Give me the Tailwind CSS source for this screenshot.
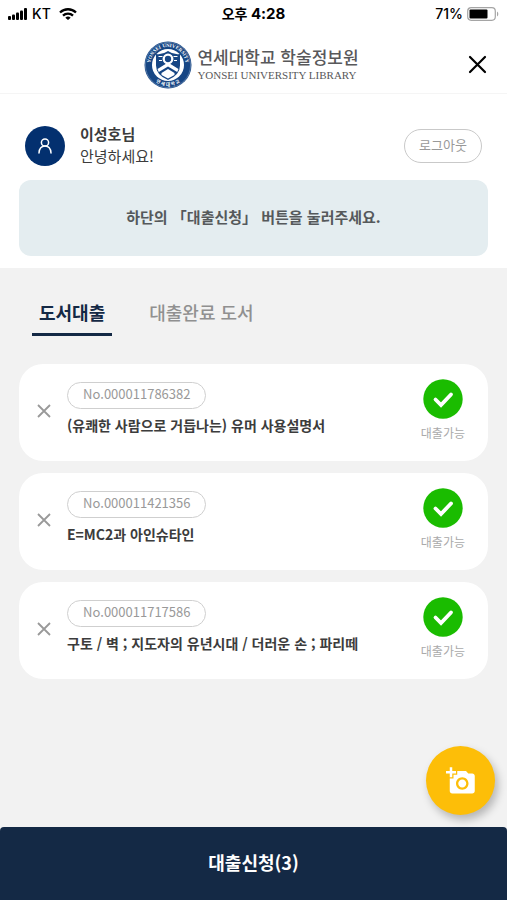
<!DOCTYPE html>
<html lang="ko">
<head>
    <meta charset="UTF-8">
    <meta name="viewport" content="width=device-width, initial-scale=1.0">
    <title>연세대학교 학술정보원</title>
    <script src="https://cdn.jsdelivr.net/npm/@tailwindcss/browser@4"></script>
</head>
<body class="flex min-h-screen flex-col bg-[#f2f2f2] font-['Noto_Sans_CJK_KR',sans-serif] text-[#3c3c3c]">

<!-- Status bar -->
<div class="grid h-7 grid-cols-3 items-center bg-white px-2 font-['Inter','Noto_Sans_CJK_KR',sans-serif] text-sm font-medium text-black">
    <div class="flex items-center gap-1">
        <svg class="h-3 w-5" viewBox="0 0 20 12" fill="currentColor" aria-hidden="true">
            <rect x="0" y="8" width="3" height="4" rx="1"/>
            <rect x="4" y="6.500" width="3" height="5.500" rx="1"/>
            <rect x="8" y="4.500" width="3" height="7.500" rx="1"/>
            <rect x="12" y="2.500" width="3" height="9.500" rx="1"/>
            <rect x="16" y="0" width="3" height="12" rx="1"/>
        </svg>
        <span>KT</span>
        <svg class="ml-1 h-3 w-[18px]" viewBox="0 0 18 12" fill="none" stroke="currentColor" stroke-width="2.300" aria-hidden="true">
            <path d="M1 4.500a11.500 11.500 0 0 1 16 0"/>
            <path d="M4 7.700a7.200 7.200 0 0 1 10 0"/>
            <path d="M6.300 9.700a3.900 3.900 0 0 1 5.400 0L9 12z" fill="currentColor" stroke="none"/>
        </svg>
    </div>
    <div class="text-center text-[15px] font-bold whitespace-nowrap"><span class="text-sm">오후</span> 4:28</div>
    <div class="flex items-center justify-end gap-1">
        <span>71%</span>
        <svg class="h-[14px] w-8" viewBox="0 0 32 14" aria-hidden="true">
            <rect x=".7" y=".7" width="27.600" height="12.600" rx="3.500" fill="#fff" stroke="#a5a5a5" stroke-width="1.200"/>
            <rect x="2.500" y="2.500" width="18" height="9" rx="1" fill="#000"/>
            <path d="M30 4.500a3 3 0 0 1 0 5z" fill="#a5a5a5"/>
        </svg>
    </div>
</div>

<!-- Header -->
<header class="relative flex h-[66px] items-center justify-center border-b border-[#f5f5f5] bg-white pt-2 pr-1">
    <a href="#" class="flex items-center gap-[5px]">
        <svg class="size-12" viewBox="0 0 48 48" aria-hidden="true">
            <defs>
                <path id="sealTop" d="M7.500 30A17.700 17.700 0 1 1 40.500 30"/>
                <path id="sealBottom" d="M5.500 34A21.200 21.200 0 0 0 42.500 34"/>
            </defs>
            <circle cx="24" cy="24" r="23.500" fill="#174684"/>
            <circle cx="24" cy="24" r="22.600" fill="none" stroke="#8ca6c6" stroke-width=".5"/>
            <circle cx="24" cy="24" r="16" fill="#fff"/>
            <text fill="#fff" font-family="Liberation Serif, serif" font-size="5" font-weight="700"><textPath href="#sealTop" startOffset="50%" text-anchor="middle">YONSEI UNIVERSITY</textPath></text>
            <text fill="#fff" font-family="Noto Sans CJK KR, sans-serif" font-size="4.500" font-weight="700"><textPath href="#sealBottom" startOffset="50%" text-anchor="middle">연 세 대 학 교</textPath></text>
            <path d="M12 13q6.500 1 12-3 5.500 4 12 3v11.500q0 9.500-12 14.500-12-5-12-14.500z" fill="#174684"/>
            <circle cx="24" cy="18" r="4.300" fill="#174684" stroke="#fff" stroke-width="2.300"/>
            <path d="M14.500 15.500h4M29.500 15.500h4M15 19.500h3M30 19.500h3" stroke="#fff" stroke-width="1"/>
            <path d="M13.500 28 24 21.500 34.500 28l-1.300 3L24 25.500 14.800 31z" fill="#fff"/>
            <path d="M17.500 32 24 28l6.500 4v2L24 37.500 17.500 34z" fill="#fff"/>
        </svg>
        <span class="flex flex-col whitespace-nowrap text-[#58585a]">
            <span class="text-[17px] leading-5 font-medium">연세대학교 학술정보원</span>
            <span class="font-['Liberation_Serif',serif] text-[11px] leading-4">YONSEI UNIVERSITY LIBRARY</span>
        </span>
    </a>
    <button type="button" aria-label="닫기" class="absolute right-5 text-black">
        <svg class="size-[19px]" viewBox="0 0 19 19" fill="none" stroke="currentColor" stroke-width="2.200" stroke-linecap="round"><path d="M2 2l15 15M17 2 2 17"/></svg>
    </button>
</header>

<!-- User -->
<section class="bg-white px-[19px] pt-[29px] pb-3">
    <div class="mb-[11px] flex h-[46px] items-center px-[6px]">
        <span class="flex size-10 items-center justify-center rounded-full bg-[#03306f] text-white">
            <svg class="size-4" viewBox="0 0 16 16" fill="none" stroke="currentColor" stroke-width="1.500" stroke-linecap="round" aria-hidden="true">
                <circle cx="8" cy="4.500" r="3.600"/>
                <path d="M2 15c.3-4 2.200-6.900 6-6.900s5.700 2.900 6 6.900"/>
            </svg>
        </span>
        <p class="ml-[15px] flex-1 pb-[2px] text-[15px] leading-[22px]">
            <span class="block font-bold">이성호님</span>
            <span class="block">안녕하세요!</span>
        </p>
        <button type="button" class="h-[34px] w-[78px] rounded-full border border-[#c9c9c9] pb-[2px] text-[13px] text-[#999]">로그아웃</button>
    </div>
    <p class="flex h-[76px] items-center justify-center rounded-xl bg-[#e4edf0] pb-[2px] text-[15px] font-bold text-[#55595b]">하단의 「대출신청」 버튼을 눌러주세요.</p>
</section>

<main class="flex-1 px-[19px] pt-[26px]">
    <!-- Tabs -->
    <nav class="ml-[13px] flex gap-[30px] text-lg leading-9 font-medium">
        <a href="#" aria-current="page" class="h-[42px] border-b-[3px] border-[#142945] px-[7px] font-bold text-[#142945]">도서대출</a>
        <a href="#" class="px-[7px] text-[#909090]">대출완료 도서</a>
    </nav>

    <!-- Books -->
    <ul class="mt-7 flex flex-col gap-3">
        <li class="flex h-[97px] items-center rounded-3xl bg-white pr-[23px] pl-[18px]">
            <button type="button" aria-label="삭제" class="mr-4 pb-1 text-[#999]">
                <svg class="size-[14px]" viewBox="0 0 14 14" fill="none" stroke="currentColor" stroke-width="1.800"><path d="M1 1l12 12M13 1 1 13"/></svg>
            </button>
            <div class="flex-1 pb-2">
                <span class="inline-flex h-[27px] items-center rounded-full border border-[#cfcfcf] px-[15px] pb-[2px] text-[13px] text-[#999]">No.000011786382</span>
                <h2 class="mt-1 text-sm leading-6 font-bold">(유쾌한 사람으로 거듭나는) 유머 사용설명서</h2>
            </div>
            <div class="flex flex-col items-center gap-1 pb-1 text-xs leading-5 text-[#aaa]">
                <svg class="size-10" viewBox="0 0 40 40" aria-hidden="true"><circle cx="20" cy="20" r="19.700" fill="#1abc00"/><path d="M12.500 20.500l5.500 5.500 10-10.500" fill="none" stroke="#fff" stroke-width="3.800" stroke-linecap="round"/></svg>
                대출가능
            </div>
        </li>
        <li class="flex h-[97px] items-center rounded-3xl bg-white pr-[23px] pl-[18px]">
            <button type="button" aria-label="삭제" class="mr-4 pb-1 text-[#999]">
                <svg class="size-[14px]" viewBox="0 0 14 14" fill="none" stroke="currentColor" stroke-width="1.800"><path d="M1 1l12 12M13 1 1 13"/></svg>
            </button>
            <div class="flex-1 pb-2">
                <span class="inline-flex h-[27px] items-center rounded-full border border-[#cfcfcf] px-[15px] pb-[2px] text-[13px] text-[#999]">No.000011421356</span>
                <h2 class="mt-1 text-sm leading-6 font-bold">E=MC2과 아인슈타인</h2>
            </div>
            <div class="flex flex-col items-center gap-1 pb-1 text-xs leading-5 text-[#aaa]">
                <svg class="size-10" viewBox="0 0 40 40" aria-hidden="true"><circle cx="20" cy="20" r="19.700" fill="#1abc00"/><path d="M12.500 20.500l5.500 5.500 10-10.500" fill="none" stroke="#fff" stroke-width="3.800" stroke-linecap="round"/></svg>
                대출가능
            </div>
        </li>
        <li class="flex h-[97px] items-center rounded-3xl bg-white pr-[23px] pl-[18px]">
            <button type="button" aria-label="삭제" class="mr-4 pb-1 text-[#999]">
                <svg class="size-[14px]" viewBox="0 0 14 14" fill="none" stroke="currentColor" stroke-width="1.800"><path d="M1 1l12 12M13 1 1 13"/></svg>
            </button>
            <div class="flex-1 pb-2">
                <span class="inline-flex h-[27px] items-center rounded-full border border-[#cfcfcf] px-[15px] pb-[2px] text-[13px] text-[#999]">No.000011717586</span>
                <h2 class="mt-1 text-sm leading-6 font-bold">구토 / 벽 ; 지도자의 유년시대 / 더러운 손 ; 파리떼</h2>
            </div>
            <div class="flex flex-col items-center gap-1 pb-1 text-xs leading-5 text-[#aaa]">
                <svg class="size-10" viewBox="0 0 40 40" aria-hidden="true"><circle cx="20" cy="20" r="19.700" fill="#1abc00"/><path d="M12.500 20.500l5.500 5.500 10-10.500" fill="none" stroke="#fff" stroke-width="3.800" stroke-linecap="round"/></svg>
                대출가능
            </div>
        </li>
    </ul>
</main>

<!-- Bottom action -->
<footer class="sticky bottom-0">
    <button type="button" aria-label="도서 촬영" class="absolute right-3 bottom-full mb-3 flex size-[69px] items-center justify-center rounded-full bg-[#fdbe08] text-white shadow-[3px_5px_8px_rgba(0,0,0,0.25)]">
        <svg class="size-[30px]" viewBox="0 0 24 24" fill="currentColor">
            <path d="M3 4V1h2v3h3v2H5v3H3V6H0V4h3zm3 6V7h3V4h7l1.830 2H21c1.100 0 2 .9 2 2v12c0 1.100-.9 2-2 2H5c-1.100 0-2-.9-2-2V10h3zm7 9c2.760 0 5-2.240 5-5s-2.240-5-5-5-5 2.240-5 5 2.240 5 5 5zm-3.200-5c0 1.770 1.430 3.200 3.200 3.200s3.200-1.430 3.200-3.200-1.430-3.200-3.200-3.200-3.200 1.430-3.200 3.200z"/>
        </svg>
    </button>
    <button type="button" class="h-[73px] w-full rounded-t-sm bg-[#142945] pb-1 text-lg font-bold text-white">대출신청(3)</button>
</footer>

</body>
</html>
